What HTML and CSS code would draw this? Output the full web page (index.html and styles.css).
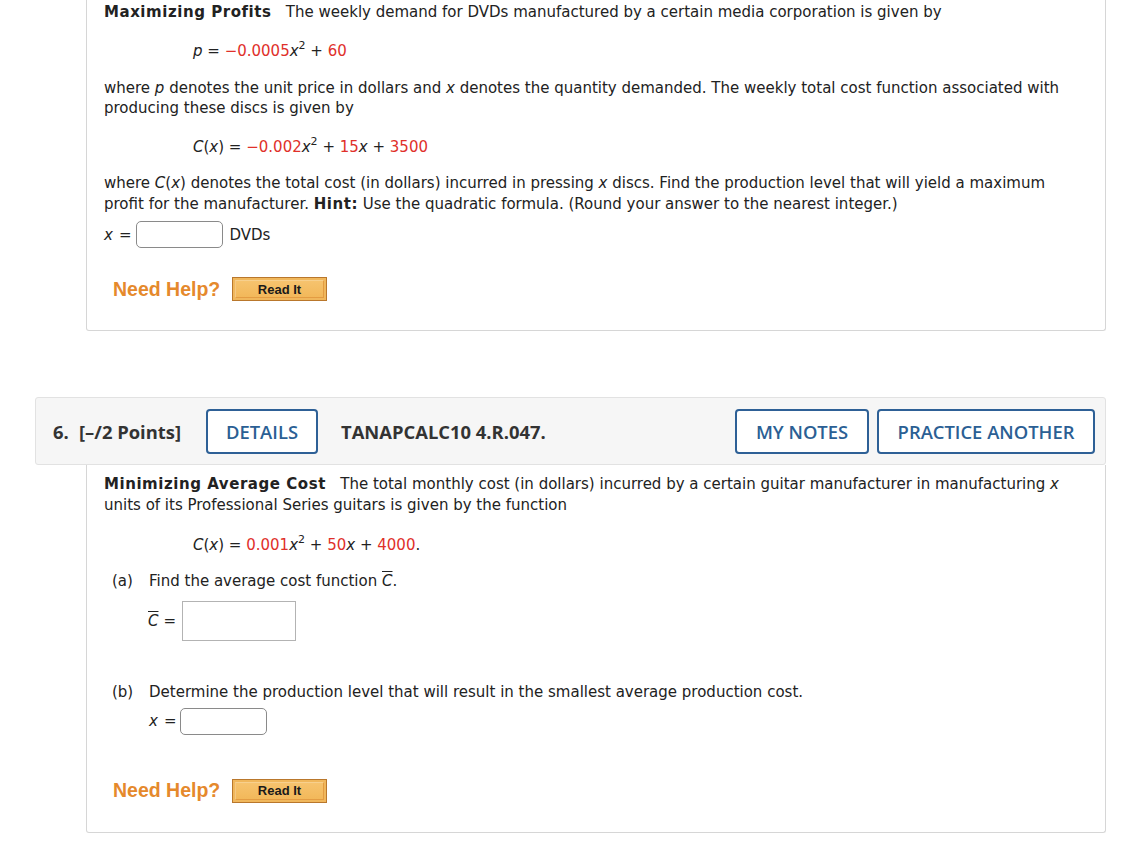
FILE: index.html
```html
<!DOCTYPE html>
<html>
<head>
<meta charset="utf-8">
<link rel="stylesheet" href="styles.css">
</head>
<body>
<div class="page">
  <div class="card card-first">
    <p class="line"><b>Maximizing Profits</b>&nbsp;&nbsp; The weekly demand for DVDs manufactured by a certain media corporation is given by</p>
    <p class="formula f1"><i>p</i> = <span class="red">−0.0005</span><i>x</i><sup>2</sup> + <span class="red">60</span></p>
    <p class="para p1">where <i>p</i> denotes the unit price in dollars and <i>x</i> denotes the quantity demanded. The weekly total cost function associated with producing these discs is given by</p>
    <p class="formula f2"><i>C</i>(<i>x</i>) = <span class="red">−0.002</span><i>x</i><sup>2</sup> + <span class="red">15</span><i>x</i> + <span class="red">3500</span></p>
    <p class="para p2">where <i>C</i>(<i>x</i>) denotes the total cost (in dollars) incurred in pressing <i>x</i> discs. Find the production level that will yield a maximum profit for the manufacturer. <b>Hint:</b> Use the quadratic formula. (Round your answer to the nearest integer.)</p>
    <div class="answer a1"><i class="var">x</i><span class="eq">=</span><span class="box round"></span><span class="unit">DVDs</span></div>
    <div class="help h1"><span class="need">Need Help?</span><span class="readit"><span class="readit-in">Read It</span></span></div>
  </div>

  <div class="qhead">
    <span class="qnum">6.</span>
    <span class="qpts">[–/2 Points]</span>
    <span class="btn btn-details">DETAILS</span>
    <span class="qcode">TANAPCALC10 4.R.047.</span>
    <span class="spacer"></span>
    <span class="btn btn-notes">MY NOTES</span>
    <span class="btn btn-practice">PRACTICE ANOTHER</span>
  </div>

  <div class="card card-second">
    <p class="para p3"><b>Minimizing Average Cost</b>&nbsp;&nbsp; The total monthly cost (in dollars) incurred by a certain guitar manufacturer in manufacturing <i>x</i> units of its Professional Series guitars is given by the function</p>
    <p class="formula f3"><i>C</i>(<i>x</i>) = <span class="red">0.001</span><i>x</i><sup>2</sup> + <span class="red">50</span><i>x</i> + <span class="red">4000</span>.</p>
    <div class="part pa"><span class="plabel">(a)</span><span class="ptext">Find the average cost function <i class="bar">C</i>.</span></div>
    <div class="answer a2"><i class="bar var2">C</i><span class="eq">=</span><span class="box square"></span></div>
    <div class="part pb"><span class="plabel">(b)</span><span class="ptext">Determine the production level that will result in the smallest average production cost.</span></div>
    <div class="answer a3"><i class="var3">x</i><span class="eq">=</span><span class="box round"></span></div>
    <div class="help h2"><span class="need">Need Help?</span><span class="readit"><span class="readit-in">Read It</span></span></div>
  </div>
</div>
</body>
</html>
```

FILE: styles.css
```css
html, body {
  margin: 0;
  padding: 0;
  background: #ffffff;
}

body {
  font-family: "DejaVu Sans", Verdana, sans-serif;
  font-size: 15px;
  color: #222222;
}

b {
  letter-spacing: 0.55px;
}

.page {
  padding-left: 35px;
  width: 1071px;
}

p {
  margin: 0;
}

.card {
  margin-left: 51px;
  border: 1px solid #d6d6d6;
  border-top: none;
  border-radius: 0 0 3px 3px;
  padding-left: 17px;
  padding-right: 16px;
  box-sizing: content-box;
  width: 985px;
}

.card-first {
  padding-top: 2px;
  padding-bottom: 29px;
}

.line, .para, .formula, .part {
  line-height: 20.5px;
}

.line {
  line-height: 20px;
}

.red {
  color: #e0302a;
}

sup {
  font-size: 11px;
  line-height: 0;
  vertical-align: 7px;
}

.formula {
  padding-left: 89px;
}

.f1 { margin-top: 19px; }
.p1 { margin-top: 16px; }
.f2 { margin-top: 18px; }
.p2 { margin-top: 16px; }

.answer {
  display: flex;
  align-items: center;
}

.a1 {
  margin-top: 7px;
  height: 27px;
}

.eq {
  margin-left: 6px;
  margin-right: 5px;
}

.var, .var2, .var3 {
  font-style: italic;
}

.box {
  display: inline-block;
  box-sizing: border-box;
  background: #fff;
}

.box.round {
  width: 87px;
  height: 27px;
  border: 1px solid #8a8a8a;
  border-radius: 5px;
}

.box.square {
  width: 114px;
  height: 40px;
  border: 1px solid #b3b3b3;
}

.unit {
  margin-left: 6px;
}

.help {
  display: flex;
  align-items: center;
  height: 24px;
  padding-left: 9px;
}

.h1 { margin-top: 29px; }

.need {
  font-family: "Liberation Sans", Arial, sans-serif;
  font-weight: bold;
  font-size: 19.5px;
  color: #e5892c;
  width: 119px;
}

.readit {
  display: inline-flex;
  box-sizing: border-box;
  width: 95px;
  height: 24px;
  border: 1px solid #b9772c;
  background: #f0b75c;
  padding: 2px;
}

.readit-in {
  flex: 1;
  display: flex;
  align-items: center;
  justify-content: center;
  border: 1px solid #e39c43;
  border-top-color: #f7d08e;
  border-left-color: #f5c884;
  background: linear-gradient(#f6c36e, #f2b85a);
  font-family: "Liberation Sans", Arial, sans-serif;
  font-weight: bold;
  font-size: 13px;
  color: #1a1a1a;
}

.qhead {
  margin-top: 66px;
  box-sizing: border-box;
  height: 68px;
  border: 1px solid #e2e2e2;
  border-radius: 3px;
  background: #f6f6f6;
  display: flex;
  align-items: center;
  padding-left: 17px;
  padding-right: 10px;
  font-family: "Open Sans", sans-serif;
  font-size: 18.4px;
  font-weight: 700;
  color: #333333;
}

.qnum {
  width: 26px;
}

.qpts {
  width: 127px;
}

.btn {
  display: inline-flex;
  align-items: center;
  justify-content: center;
  box-sizing: border-box;
  height: 45px;
  border: 2px solid #2e6096;
  border-radius: 4px;
  background: #ffffff;
  color: #2b5f94;
  font-size: 18.4px;
  font-weight: 600;
}

.btn-details {
  width: 112px;
}

.qcode {
  margin-left: 23px;
}

.spacer {
  flex: 1;
}

.btn-notes {
  width: 134px;
}

.btn-practice {
  width: 218px;
  margin-left: 8px;
}

.card-second {
  padding-top: 9px;
  padding-bottom: 29px;
}

.f3 { margin-top: 20px; }

.part {
  display: flex;
  padding-left: 8px;
}

.plabel {
  width: 37px;
}

.pa { margin-top: 15px; }

.bar {
  text-decoration: overline;
}

.a2 {
  margin-top: 10px;
  padding-left: 44px;
  height: 40px;
}

.a2 .eq {
  margin-left: 5px;
  margin-right: 6px;
}

.pb { margin-top: 41px; }

.a3 {
  margin-top: 5px;
  padding-left: 45px;
  height: 27px;
}

.a3 .eq {
  margin-right: 4px;
}

.h2 { margin-top: 44px; }
```
